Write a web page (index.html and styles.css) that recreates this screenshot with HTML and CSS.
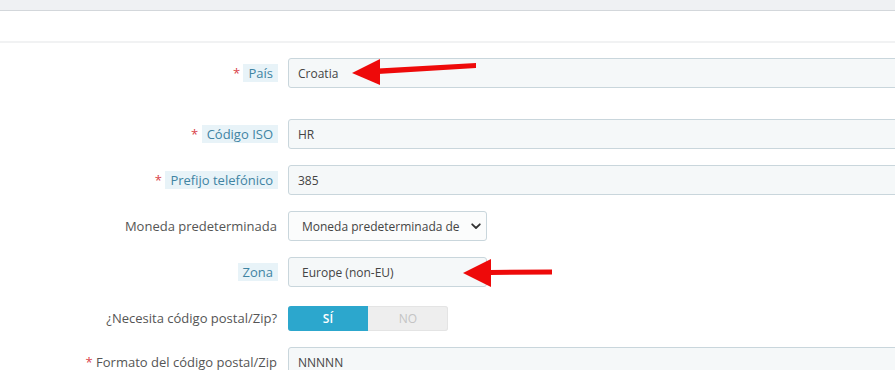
FILE: index.html
```html
<!DOCTYPE html>
<html lang="es">
<head>
<meta charset="utf-8">
<title>País</title>
<link rel="stylesheet" href="styles.css">
</head>
<body>
<div class="page">
  <div class="topbar"></div>
  <div class="panel-heading"></div>
  <form class="form">
    <div class="row row-first">
      <label class="label"><span class="req">*</span> <span class="tip">País</span></label>
      <div class="field"><input class="input" type="text" value="Croatia"></div>
    </div>
    <div class="row">
      <label class="label"><span class="req">*</span> <span class="tip">Código ISO</span></label>
      <div class="field"><input class="input" type="text" value="HR"></div>
    </div>
    <div class="row">
      <label class="label"><span class="req">*</span> <span class="tip">Prefijo telefónico</span></label>
      <div class="field"><input class="input" type="text" value="385"></div>
    </div>
    <div class="row">
      <label class="label plain">Moneda predeterminada</label>
      <div class="field">
        <div class="select">
          <span class="select-text">Moneda predeterminada de</span>
          <svg class="chev" width="10" height="7" viewBox="0 0 10 7"><path d="M1.2 1.3 L5 5 L8.8 1.3" fill="none" stroke="#333" stroke-width="1.8" stroke-linecap="round" stroke-linejoin="round"/></svg>
        </div>
      </div>
    </div>
    <div class="row">
      <label class="label"><span class="tip">Zona</span></label>
      <div class="field"><div class="select zone"><span class="select-text">Europe (non-EU)</span></div></div>
    </div>
    <div class="row">
      <label class="label plain">¿Necesita código postal/Zip?</label>
      <div class="field">
        <div class="switch"><span class="on">SÍ</span><span class="off">NO</span></div>
      </div>
    </div>
    <div class="row row-last">
      <label class="label plain"><span class="req">*</span> Formato del código postal/Zip</label>
      <div class="field"><input class="input" type="text" value="NNNNN"></div>
    </div>
  </form>
  <svg class="arrow arrow-1" width="140" height="40" viewBox="0 0 140 40">
    <path d="M28 10.5 L126 5 L126 10 L28 16 Z" fill="#ee0a0a"/>
    <path d="M2 15 L30 1 L30 27 Z" fill="#ee0a0a"/>
  </svg>
  <svg class="arrow arrow-2" width="100" height="40" viewBox="0 0 100 40">
    <path d="M28 11 L90 10.5 L90 15.5 L28 16 Z" fill="#ee0a0a"/>
    <path d="M1 14 L29 0 L29 28 Z" fill="#ee0a0a"/>
  </svg>
</div>
</body>
</html>
```

FILE: styles.css
```css
html, body {
  margin: 0;
  padding: 0;
  background: #fff;
  overflow: hidden;
}
body {
  font-family: "Open Sans", "Noto Sans", sans-serif;
  font-size: 13px;
  color: #555;
}
.page {
  position: relative;
  width: 895px;
  height: 370px;
  overflow: hidden;
}
.topbar {
  height: 10px;
  background: #eff1f3;
  border-bottom: 1px solid #d3d7db;
}
.panel-heading {
  height: 30px;
  border-bottom: 2px solid #f1f2f3;
}
.form {
  padding-top: 15px;
  display: flex;
  flex-direction: column;
  gap: 16px;
}
.row {
  display: grid;
  grid-template-columns: 278px 640px;
  column-gap: 10px;
  height: 30px;
  align-items: center;
}
.row-first {
  margin-bottom: 15px;
}
.row-last {
  margin-top: -2px;
}
.label {
  text-align: right;
  white-space: nowrap;
  color: #555;
  line-height: 18px;
}
.label.plain {
  padding-right: 1px;
}
.req {
  color: #d9434a;
}
.tip {
  display: inline-block;
  background: #e8f3f8;
  color: #3f84a3;
  padding: 0 5px;
  line-height: 18px;
}
.field {
  display: flex;
  align-items: center;
}
.input {
  box-sizing: border-box;
  width: 640px;
  height: 30px;
  border: 1px solid #c9d6dc;
  border-radius: 3px;
  background: #f5f8f9;
  padding: 0 9px;
  font-family: "Open Sans", "Noto Sans", sans-serif;
  font-size: 12px;
  color: #444;
  outline: none;
}
.select {
  box-sizing: border-box;
  width: 199px;
  height: 30px;
  border: 1px solid #c9d6dc;
  border-radius: 3px;
  background: #fbfcfc;
  display: flex;
  align-items: center;
  padding: 0 5px 0 13px;
  font-size: 12px;
  color: #444;
}
.select.zone {
  background: #f5f8f9;
}
.select-text {
  flex: 1;
  white-space: nowrap;
}
.chev {
  flex: none;
  margin-left: 6px;
}
.switch {
  display: flex;
  width: 160px;
  height: 25px;
  border-radius: 3px;
  overflow: hidden;
  background: #eeeeee;
  box-shadow: inset 0 0 0 1px #e4e4e4;
}
.switch span {
  flex: 1;
  display: flex;
  align-items: center;
  justify-content: center;
  font-size: 12px;
}
.switch .on {
  background: #2ca7cd;
  color: #fff;
  font-weight: 600;
}
.switch .off {
  color: #c4c4c4;
}
.arrow {
  position: absolute;
}
.arrow-1 {
  left: 350px;
  top: 58px;
}
.arrow-2 {
  left: 462px;
  top: 259px;
}
```
